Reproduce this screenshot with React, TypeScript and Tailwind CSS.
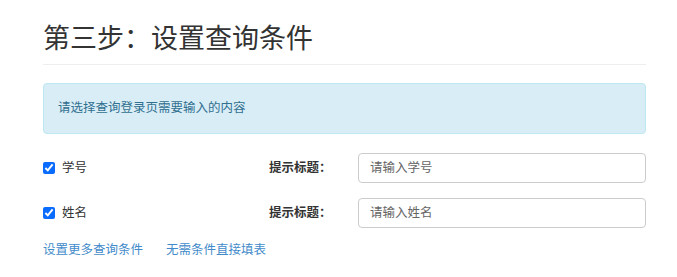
const font = { fontFamily: '"Liberation Sans", "Noto Sans CJK SC", sans-serif' };

function ConditionRow({ label, placeholder }: { label: string; placeholder: string }) {
  return (
    <div className="flex h-[30px] items-center">
      <label className="flex w-[226px] items-center gap-[7px] text-[12.5px] text-[#333]">
        <input type="checkbox" defaultChecked className="m-0 h-[12px] w-[12px] accent-[#0a6cff]" />
        <span>{label}</span>
      </label>
      <div className="w-[89px] text-[12.5px] font-bold text-[#333]">提示标题：</div>
      <input
        type="text"
        placeholder={placeholder}
        className="h-[30px] w-[288px] rounded border border-[#ccc] bg-white px-[11px] text-[12.5px] text-[#555] outline-none placeholder:text-[#666]"
      />
    </div>
  );
}

export default function App() {
  return (
    <div className="min-h-[277px] bg-white" style={font}>
      <div className="ml-[43px] w-[603px] pt-[21px]">
        <h2 className="border-b border-[#eee] pb-[7px] text-[27px] font-normal leading-[36px] text-[#333]">
          第三步：设置查询条件
        </h2>
        <div className="mt-[18px] flex h-[51px] items-center rounded border border-[#bce8f1] bg-[#d9edf7] px-[14px] text-[12.5px] text-[#31708f]">
          请选择查询登录页需要输入的内容
        </div>
        <div className="mt-[19px] flex flex-col gap-[15px]">
          <ConditionRow label="学号" placeholder="请输入学号" />
          <ConditionRow label="姓名" placeholder="请输入姓名" />
        </div>
        <div className="mt-[12px] flex gap-[23px] text-[12.5px] leading-[20px]">
          <a href="#" className="text-[#428bca] hover:underline">设置更多查询条件</a>
          <a href="#" className="text-[#428bca] hover:underline">无需条件直接填表</a>
        </div>
      </div>
    </div>
  );
}
